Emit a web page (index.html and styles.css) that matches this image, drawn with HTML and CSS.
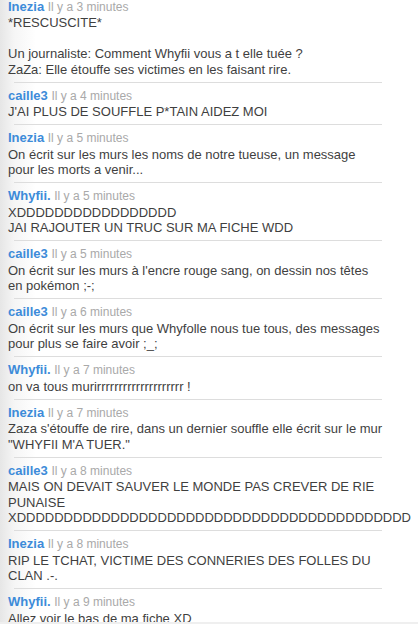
FILE: index.html
```html
<!DOCTYPE html>
<html lang="fr">
<head>
<meta charset="utf-8">
<title>Chatbox</title>
<link rel="stylesheet" href="styles.css">
</head>
<body>
<div class="chat">
  <div class="msg first">
    <div class="head"><span class="user">Inezia</span> <span class="date">Il y a 3 minutes</span></div>
    <div class="text">*RESCUSCITE*<br><br>Un journaliste: Comment Whyfii vous a t elle tuée ?<br>ZaZa: Elle étouffe ses victimes en les faisant rire.</div>
  </div>
  <div class="msg">
    <div class="head"><span class="user">caille3</span> <span class="date">Il y a 4 minutes</span></div>
    <div class="text">J'AI PLUS DE SOUFFLE P*TAIN AIDEZ MOI</div>
  </div>
  <div class="msg">
    <div class="head"><span class="user">Inezia</span> <span class="date">Il y a 5 minutes</span></div>
    <div class="text">On écrit sur les murs les noms de notre tueuse, un message pour les morts a venir...</div>
  </div>
  <div class="msg">
    <div class="head"><span class="user">Whyfii.</span> <span class="date">Il y a 5 minutes</span></div>
    <div class="text">XDDDDDDDDDDDDDDDDD<br>JAI RAJOUTER UN TRUC SUR MA FICHE WDD</div>
  </div>
  <div class="msg">
    <div class="head"><span class="user">caille3</span> <span class="date">Il y a 5 minutes</span></div>
    <div class="text">On écrit sur les murs à l'encre rouge sang, on dessin nos têtes en pokémon ;-;</div>
  </div>
  <div class="msg">
    <div class="head"><span class="user">caille3</span> <span class="date">Il y a 6 minutes</span></div>
    <div class="text">On écrit sur les murs que Whyfolle nous tue tous, des messages pour plus se faire avoir ;_;</div>
  </div>
  <div class="msg">
    <div class="head"><span class="user">Whyfii.</span> <span class="date">Il y a 7 minutes</span></div>
    <div class="text">on va tous murirrrrrrrrrrrrrrrrrrrr !</div>
  </div>
  <div class="msg">
    <div class="head"><span class="user">Inezia</span> <span class="date">Il y a 7 minutes</span></div>
    <div class="text">Zaza s'étouffe de rire, dans un dernier souffle elle écrit sur le mur "WHYFII M'A TUER."</div>
  </div>
  <div class="msg">
    <div class="head"><span class="user">caille3</span> <span class="date">Il y a 8 minutes</span></div>
    <div class="text">MAIS ON DEVAIT SAUVER LE MONDE PAS CREVER DE RIE PUNAISE XDDDDDDDDDDDDDDDDDDDDDDDDDDDDDDDDDDDDDDDDDD</div>
  </div>
  <div class="msg">
    <div class="head"><span class="user">Inezia</span> <span class="date">Il y a 8 minutes</span></div>
    <div class="text">RIP LE TCHAT, VICTIME DES CONNERIES DES FOLLES DU CLAN .-.</div>
  </div>
  <div class="msg">
    <div class="head"><span class="user">Whyfii.</span> <span class="date">Il y a 9 minutes</span></div>
    <div class="text">Allez voir le bas de ma fiche XD</div>
  </div>
</div>
</body>
</html>
```
FILE: styles.css
```css
html, body {
  margin: 0;
  padding: 0;
  height: 100%;
  overflow: hidden;
}
body {
  background: linear-gradient(to right, #e6e6e6 0, #f5f5f5 14px, #ffffff 36px);
  font-family: "Liberation Sans", Arial, sans-serif;
  font-size: 13px;
  line-height: 15.4px;
  color: #3f3f3f;
  position: relative;
}
body::after {
  content: "";
  position: absolute;
  left: 0;
  right: 0;
  bottom: 0;
  height: 2px;
  background: #efefef;
}
.chat {
  margin-top: -1px;
  width: 418px;
}
.msg {
  padding: 5px 0 4.75px 8px;
  border-top: 1px solid transparent;
  position: relative;
}
.msg::before {
  content: "";
  position: absolute;
  top: -1px;
  left: 14px;
  width: 368px;
  height: 1px;
  background: #dddddd;
}
.msg.first {
  padding-top: 0;
  border-top: 0;
}
.msg.first::before {
  display: none;
}
.user {
  color: #3d8bd9;
  font-weight: bold;
}
.date {
  color: #a9a9a9;
  font-size: 12px;
}
.text {
  width: 375px;
}
```
